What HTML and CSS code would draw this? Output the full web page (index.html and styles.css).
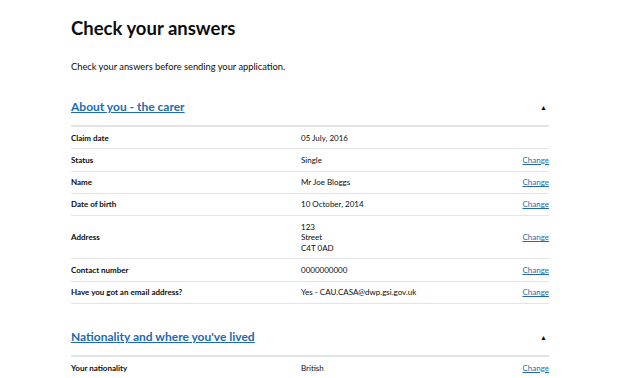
FILE: index.html
```html
<!DOCTYPE html>
<html lang="en">
<head>
    <meta charset="UTF-8">
    <meta name="viewport" content="width=device-width, initial-scale=1.0">
    <title>Check your answers</title>
    <link rel="stylesheet" href="styles.css">
</head>
<body>
    <main class="page">
        <h1>Check your answers</h1>
        <p class="lead">Check your answers before sending your application.</p>

        <section class="answers">
            <div class="answers-head">
                <h2><a href="#">About you - the carer</a></h2>
                <span class="toggle">&#9650;</span>
            </div>
            <div class="row">
                <div class="key">Claim date</div>
                <div class="value">05 July, 2016</div>
                <div class="action"></div>
            </div>
            <div class="row">
                <div class="key">Status</div>
                <div class="value">Single</div>
                <div class="action"><a href="#">Change</a></div>
            </div>
            <div class="row">
                <div class="key">Name</div>
                <div class="value">Mr Joe Bloggs</div>
                <div class="action"><a href="#">Change</a></div>
            </div>
            <div class="row">
                <div class="key">Date of birth</div>
                <div class="value">10 October, 2014</div>
                <div class="action"><a href="#">Change</a></div>
            </div>
            <div class="row">
                <div class="key">Address</div>
                <div class="value">123<br>Street<br>C4T 0AD</div>
                <div class="action"><a href="#">Change</a></div>
            </div>
            <div class="row">
                <div class="key">Contact number</div>
                <div class="value">0000000000</div>
                <div class="action"><a href="#">Change</a></div>
            </div>
            <div class="row">
                <div class="key">Have you got an email address?</div>
                <div class="value">Yes - CAU.CASA@dwp.gsi.gov.uk</div>
                <div class="action"><a href="#">Change</a></div>
            </div>
        </section>

        <section class="answers">
            <div class="answers-head">
                <h2><a href="#">Nationality and where you've lived</a></h2>
                <span class="toggle">&#9650;</span>
            </div>
            <div class="row">
                <div class="key">Your nationality</div>
                <div class="value">British</div>
                <div class="action"><a href="#">Change</a></div>
            </div>
        </section>
    </main>
</body>
</html>
```

FILE: styles.css
```css
body {
    margin: 0;
    background: #fff;
    color: #0b0c0c;
    font-family: Lato, "Liberation Sans", Arial, sans-serif;
}
.page {
    width: 478px;
    margin: 0 0 0 71px;
    padding-top: 16px;
}
h1 {
    font-size: 18.5px;
    font-weight: bold;
    margin: 0;
    line-height: 24px;
}
.lead {
    font-size: 9.3px;
    margin: 20px 0 0;
    line-height: 14px;
}
.answers {
    margin-top: 24px;
}
.answers + .answers {
    margin-top: 24px;
}
.answers-head {
    display: flex;
    justify-content: space-between;
    align-items: center;
    padding-bottom: 9px;
    border-bottom: 2px solid #e3e4e5;
}
.answers-head h2 {
    margin: 0;
    font-size: 12px;
    line-height: 18px;
}
.answers-head a {
    color: #1d6aae;
}
.toggle {
    font-size: 7px;
    margin-right: 2px;
}
.row {
    display: flex;
    align-items: center;
    font-size: 8px;
    line-height: 10.5px;
    padding: 5.5px 0 5.3px;
    border-bottom: 1px solid #e3e4e5;
}
.key {
    width: 230px;
    font-weight: bold;
}
.value {
    flex: 1;
}
.action a {
    color: #1d6aae;
}
```
